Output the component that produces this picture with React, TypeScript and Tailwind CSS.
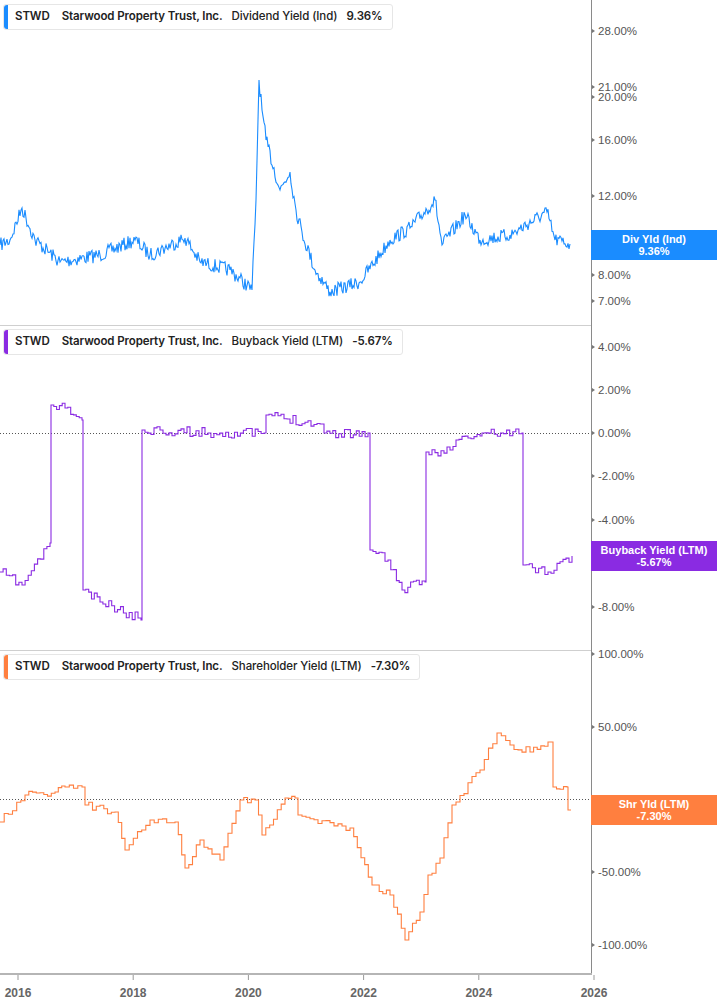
import React from "react";

type P = [number, number];
function rng(seed: number) {
  let s = seed;
  return () => {
    s = (s * 16807) % 2147483647;
    return s / 2147483647;
  };
}
function noisy(pts: P[], amp: number, seed: number, step = 1): string {
  const r = rng(seed);
  const out: string[] = [];
  for (let i = 0; i < pts.length - 1; i++) {
    const [x0, y0] = pts[i];
    const [x1, y1] = pts[i + 1];
    const n = Math.max(1, Math.round((x1 - x0) / step));
    for (let k = 0; k < n; k++) {
      const t = k / n;
      const x = x0 + (x1 - x0) * t;
      const y = y0 + (y1 - y0) * t + (k === 0 ? 0 : (r() - 0.5) * amp);
      out.push(`${x.toFixed(1)},${y.toFixed(1)}`);
    }
  }
  const l = pts[pts.length - 1];
  out.push(`${l[0]},${l[1]}`);
  return "M" + out.join(" L");
}
function steps(pts: P[], amp: number, seed: number, w = 6): string {
  const r = rng(seed);
  const out: string[] = [];
  out.push(`M${pts[0][0]},${pts[0][1]}`);
  for (let i = 0; i < pts.length - 1; i++) {
    const [x0, y0] = pts[i];
    const [x1, y1] = pts[i + 1];
    const n = Math.max(1, Math.round((x1 - x0) / w));
    for (let k = 0; k < n; k++) {
      const x = x0 + ((x1 - x0) * k) / n;
      const y = y0 + ((y1 - y0) * k) / n + (k === 0 ? 0 : (r() - 0.5) * amp);
      out.push(`H${x.toFixed(1)} V${y.toFixed(1)}`);
    }
  }
  const l = pts[pts.length - 1];
  out.push(`H${l[0]} V${l[1]}`);
  return out.join(" ");
}

const div: P[] = [[0,245],[10,240],[22,208],[35,240],[60,262],[100,255],[135,240],[150,255],[185,238],[200,262],[230,270],[252,290],[256,200],[259,80],[262,110],[266,140],[280,190],[290,172],[296,210],[302,232],[315,270],[330,292],[360,282],[390,240],[410,228],[435,200],[442,245],[465,215],[480,240],[510,235],[547,212],[555,240],[570,244]];
const buy: P[] = [[0,572],[22,585],[50,543],[51,405],[65,408],[82,420],[83,590],[100,602],[138,618],[141,620],[142,430],[160,430],[208,433],[264,433],[266,415],[320,424],[324,433],[368,433],[370,550],[388,560],[402,590],[425,582],[426,452],[450,450],[456,440],[480,436],[482,433],[522,433],[523,565],[548,572],[572,556]];
const shr: P[] = [[0,822],[25,795],[55,792],[65,787],[82,787],[85,805],[115,812],[125,850],[150,820],[175,822],[185,868],[200,840],[220,860],[240,800],[255,800],[262,835],[285,798],[295,798],[298,815],[350,828],[372,885],[390,895],[405,940],[420,912],[428,875],[440,858],[452,805],[480,770],[497,733],[510,745],[530,752],[548,742],[553,787],[567,787],[568,810],[571,810]];

const F = "Inter, 'Noto Sans', sans-serif";

function Legend({ color, label, value }: { color: string; label: string; value: string }) {
  return (
    <div className="flex h-[26px] w-fit items-center rounded-[3px] border border-[#e6e6e6] bg-white pr-[9px] text-[11.5px] font-semibold tracking-[-0.1px] text-[#222]" style={{ fontFamily: F }}>
      <div className="h-full w-[4px] rounded-l-[3px]" style={{ background: color }} />
      <span className="ml-[7px]">STWD</span>
      <span className="ml-[12px]">Starwood Property Trust, Inc.</span>
      <span className="ml-[9px] font-medium">{label}</span>
      <span className="ml-[9px]">{value}</span>
    </div>
  );
}

function Badge({ color, a, b }: { color: string; a: string; b: string }) {
  return (
    <div className="flex h-[30px] w-[126px] flex-col items-center justify-center text-[11px] font-bold leading-[12px] text-white" style={{ background: color, fontFamily: "'Liberation Sans', sans-serif" }}>
      <span>{a}</span>
      <span>{b}</span>
    </div>
  );
}

const ticks: [string, number][] = [["28.00%",31],["21.00%",87],["20.00%",97],["16.00%",140],["12.00%",196],["8.00%",275],["7.00%",301],["4.00%",347],["2.00%",390],["0.00%",433],["-2.00%",476],["-4.00%",520],["-6.00%",563],["-8.00%",607],["100.00%",654],["50.00%",727],["-50.00%",872],["-100.00%",945]];
const years = [2016, 2018, 2020, 2022, 2024, 2026];

function Panel({ color, label, value, badgeTop, a, b }: { color: string; label: string; value: string; badgeTop: string; a: string; b: string }) {
  return (
    <div className="flex h-[325px] flex-col pl-[3px] pt-[4px]">
      <Legend color={color} label={label} value={value} />
      <div className={`flex justify-end ${badgeTop}`}>
        <Badge color={color} a={a} b={b} />
      </div>
    </div>
  );
}

export default function App() {
  return (
    <div className="relative h-[1005px] w-[717px] overflow-hidden bg-white">
      <svg width="717" height="1005" className="absolute left-0 top-0">
        <line x1="0" y1="325.5" x2="591" y2="325.5" stroke="#cfcfcf" />
        <line x1="0" y1="650.5" x2="591" y2="650.5" stroke="#cfcfcf" />
        <line x1="591.5" y1="0" x2="591.5" y2="975" stroke="#8a8a8a" />
        <line x1="0" y1="974" x2="592" y2="974" stroke="#b5b5b5" strokeWidth="2" />
        <line x1="0" y1="433.5" x2="591" y2="433.5" stroke="#555" strokeDasharray="1 2" />
        <line x1="0" y1="799.5" x2="591" y2="799.5" stroke="#555" strokeDasharray="1 2" />
        {ticks.map(([t, y]) => (
          <g key={t + y}>
            <path d={`M592,${y - 2} L595,${y} L592,${y + 2}Z`} fill="#777" />
            <text x="598" y={y + 4} fontSize="11.5" fill="#555" fontFamily="'Liberation Sans', sans-serif">{t}</text>
          </g>
        ))}
        {years.map((yr, i) => {
          const x = 18 + i * 115.2;
          return (
            <g key={yr}>
              <line x1={x} y1="975" x2={x} y2="980" stroke="#999" />
              <text x={x} y="997" fontSize="12" fontWeight="bold" fill="#666" textAnchor="middle" fontFamily="'Liberation Sans', sans-serif">{yr}</text>
            </g>
          );
        })}
        <path d={noisy(div, 14, 7)} fill="none" stroke="#1a8cff" strokeWidth="1.1" />
        <path d={steps(buy, 10, 11, 3)} fill="none" stroke="#8a2be2" strokeWidth="1.1" />
        <path d={steps(shr, 8, 5, 4)} fill="none" stroke="#ff7f3f" strokeWidth="1.1" />
      </svg>
      <div className="relative flex flex-col">
        <Panel color="#1a8cff" label="Dividend Yield (Ind)" value="9.36%" badgeTop="mt-[200px]" a="Div Yld (Ind)" b="9.36%" />
        <Panel color="#8a2be2" label="Buyback Yield (LTM)" value="-5.67%" badgeTop="mt-[186px]" a="Buyback Yield (LTM)" b="-5.67%" />
        <Panel color="#ff7f3f" label="Shareholder Yield (LTM)" value="-7.30%" badgeTop="mt-[115px]" a="Shr Yld (LTM)" b="-7.30%" />
      </div>
    </div>
  );
}
